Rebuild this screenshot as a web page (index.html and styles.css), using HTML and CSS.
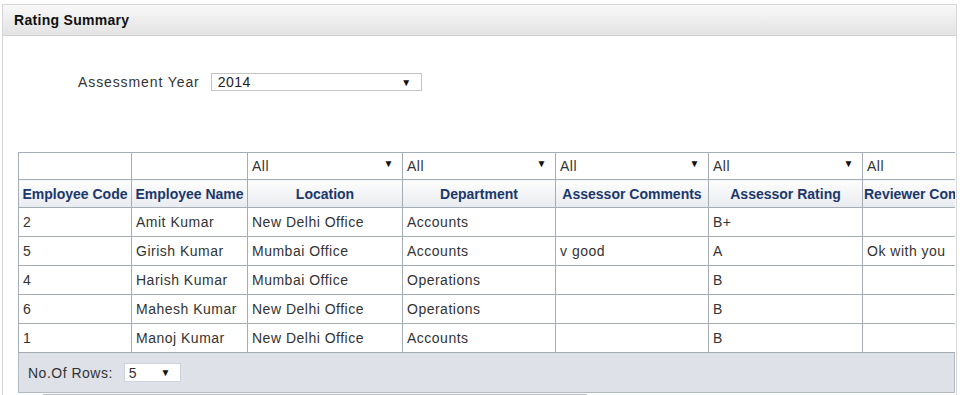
FILE: index.html
```html
<html>
<head>
<link rel="stylesheet" href="styles.css">
</head>
<body>
<div class="panel">
    <div class="panel-head">Rating Summary</div>

    <div class="year-row">
        <span class="year-label">Assessment Year</span>
        <div class="dropdown year-select">
            <span>2014</span>
            <span class="arrow">&#9660;</span>
        </div>
    </div>

    <div class="grid-wrap">
        <table class="grid">
            <colgroup>
                <col style="width:113px">
                <col style="width:116px">
                <col style="width:155px">
                <col style="width:153px">
                <col style="width:153px">
                <col style="width:154px">
                <col style="width:150px">
            </colgroup>
            <tr class="filter-row">
                <td></td>
                <td></td>
                <td><div class="filter"><span>All</span><span class="arrow">&#9660;</span></div></td>
                <td><div class="filter"><span>All</span><span class="arrow">&#9660;</span></div></td>
                <td><div class="filter"><span>All</span><span class="arrow">&#9660;</span></div></td>
                <td><div class="filter"><span>All</span><span class="arrow">&#9660;</span></div></td>
                <td><div class="filter"><span>All</span><span class="arrow">&#9660;</span></div></td>
            </tr>
            <tr class="head-row">
                <th>Employee Code</th>
                <th>Employee Name</th>
                <th>Location</th>
                <th>Department</th>
                <th>Assessor Comments</th>
                <th>Assessor Rating</th>
                <th class="cut">Reviewer Comments</th>
            </tr>
            <tr>
                <td>2</td><td>Amit Kumar</td><td>New Delhi Office</td><td>Accounts</td><td></td><td>B+</td><td></td>
            </tr>
            <tr>
                <td>5</td><td>Girish Kumar</td><td>Mumbai Office</td><td>Accounts</td><td>v good</td><td>A</td><td>Ok with you</td>
            </tr>
            <tr>
                <td>4</td><td>Harish Kumar</td><td>Mumbai Office</td><td>Operations</td><td></td><td>B</td><td></td>
            </tr>
            <tr>
                <td>6</td><td>Mahesh Kumar</td><td>New Delhi Office</td><td>Operations</td><td></td><td>B</td><td></td>
            </tr>
            <tr>
                <td>1</td><td>Manoj Kumar</td><td>New Delhi Office</td><td>Accounts</td><td></td><td>B</td><td></td>
            </tr>
        </table>
        <div class="grid-foot">
            <span>No.Of Rows:</span>
            <div class="dropdown rows-select">
                <span>5</span>
                <span class="arrow">&#9660;</span>
            </div>
        </div>
    </div>
    <div class="hscroll"></div>
</div>
</body>
</html>
```

FILE: styles.css
```css
html, body {
    margin: 0;
    height: 100%;
    background: #fff;
    font-family: "Liberation Sans", Arial, sans-serif;
    font-size: 14px;
    letter-spacing: 0.5px;
    color: #222;
    overflow: hidden;
}

.panel {
    margin: 4px 3px 0 2px;
    height: 391px;
    border: 1px solid #d6d6d6;
    border-bottom: none;
    box-sizing: border-box;
}

.panel-head {
    height: 30px;
    line-height: 30px;
    padding-left: 11px;
    font-weight: bold;
    font-size: 14px;
    letter-spacing: 0.3px;
    color: #111;
    background: linear-gradient(#f8f8f8, #e3e3e3);
    border-bottom: 1px solid #d0d0d0;
}

.year-row {
    display: flex;
    align-items: center;
    margin: 37px 0 0 75px;
    gap: 11px;
}

.year-label {
    color: #333;
    letter-spacing: 0.9px;
}

.dropdown {
    display: flex;
    align-items: center;
    justify-content: space-between;
    box-sizing: border-box;
    border: 1px solid #c4c4c4;
    background: #fff;
    padding: 0 9px 0 6px;
}

.year-select {
    width: 211px;
    height: 18px;
}

.arrow {
    font-size: 10px;
    color: #111;
}

.grid-wrap {
    margin: 61px 1px 0 15px;
    overflow: hidden;
}

.grid {
    border-collapse: collapse;
    table-layout: fixed;
    width: 994px;
    font-size: 14px;
    letter-spacing: 0.5px;
    color: #333;
}

.grid td, .grid th {
    border: 1px solid #a4acb4;
    padding: 0 4px;
    white-space: nowrap;
    overflow: hidden;
}

.grid tr {
    height: 29px;
}

.grid .filter-row {
    height: 27px;
}

.grid .head-row {
    height: 28px;
}

.filter {
    display: flex;
    justify-content: space-between;
    padding-right: 4px;
}

.head-row th {
    font-size: 14px;
    font-weight: bold;
    letter-spacing: 0;
    color: #1c376b;
    text-align: center;
    padding: 0;
    background: linear-gradient(#fdfdfd, #e8ebef);
}

.head-row th.cut {
    text-align: left;
    padding-left: 1px;
}

.grid-foot {
    display: flex;
    align-items: center;
    gap: 11px;
    height: 39px;
    padding-left: 9px;
    background: #dee2e8;
    border: 1px solid #b4bac2;
    border-top: none;
    color: #333;
}

.rows-select {
    width: 57px;
    height: 19px;
    border-color: #d0d4da;
    padding-left: 4px;
}

.hscroll {
    margin: 1px 0 0 40px;
    height: 3px;
    width: 544px;
    border-top: 1px solid #b8bcc2;
    background: #e8eaee;
}
```
